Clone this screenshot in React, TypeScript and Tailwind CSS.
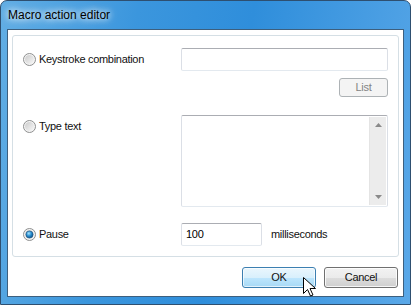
import React from "react";

const Radio = ({ checked }: { checked?: boolean }) => (
  <svg width="13" height="13" viewBox="0 0 13 13" className="shrink-0">
    <defs>
      <linearGradient id="rg" x1="0" y1="0" x2="1" y2="1">
        <stop offset="0" stopColor="#cbcbcb" />
        <stop offset="1" stopColor="#f8f8f8" />
      </linearGradient>
      <radialGradient id="dot" cx="0.4" cy="0.35" r="0.7">
        <stop offset="0" stopColor="#a8e6ff" />
        <stop offset="0.5" stopColor="#2a8ed0" />
        <stop offset="1" stopColor="#0c4f86" />
      </radialGradient>
    </defs>
    <circle cx="6.5" cy="6.5" r="6" fill="#f4f4f4" stroke="#8e8f8f" strokeWidth="1" />
    <circle cx="6.5" cy="6.5" r="4.5" fill="url(#rg)" />
    {checked && <circle cx="6.5" cy="6.5" r="3.6" fill="url(#dot)" stroke="#1b4f7a" strokeWidth="0.6" />}
  </svg>
);

const Label = ({ text, checked }: { text: string; checked?: boolean }) => (
  <div className="flex items-center gap-[3px] h-[23px] pl-[10px] w-[168px] shrink-0">
    <Radio checked={checked} />
    <span>{text}</span>
  </div>
);

const field =
  "border border-[#dbdfe6] border-t-[#abadb3] border-b-[#e3e9ef] rounded-[2px] bg-white";

export default function App() {
  return (
    <div
      className="relative w-[411px] h-[305px] flex flex-col rounded-t-[7px] border border-[#2e4f70] bg-[linear-gradient(100deg,#62aee4_0%,#3b96dd_30%,#2f8edb_55%,#5aa8e8_100%)] overflow-hidden"
      style={{ fontFamily: '"Liberation Sans", Arial, sans-serif' }}
    >
      {/* title bar */}
      <div className="h-[28px] flex items-center pl-[7px] text-[12px] text-black">
        <span className="[text-shadow:0_0_6px_#ffffff,0_0_10px_#ffffff]">Macro action editor</span>
      </div>

      {/* client area */}
      <div className="mx-[6px] mb-[7px] flex-1 border border-[#3d5f7e] bg-white flex flex-col pt-[5px] px-[4px] text-[11px] tracking-[-0.3px] text-[#111]">
        <div className="border border-[#d5dfe5] rounded-[3px] h-[222px] flex flex-col pt-[12px]">
          {/* keystroke */}
          <div className="flex">
            <Label text="Keystroke combination" />
            <div className={`${field} w-[207px] h-[23px]`} />
          </div>
          <div className="flex justify-end pr-[10px] mt-[7px]">
            <div className="w-[49px] h-[19px] border border-[#adb2b5] rounded-[3px] bg-[#f4f4f4] text-[#838383] flex items-center justify-center">
              List
            </div>
          </div>

          {/* type text */}
          <div className="flex mt-[18px]">
            <Label text="Type text" />
            <div className={`${field} w-[207px] h-[92px] flex justify-end p-[1px]`}>
              <div className="w-[17px] h-full bg-[#ececec] border-l border-[#e4e4e4] flex flex-col justify-between items-center py-[6px]">
                <svg width="7" height="4" viewBox="0 0 7 4">
                  <path d="M0 4 L3.5 0 L7 4 Z" fill="#8a8a8a" />
                </svg>
                <svg width="7" height="4" viewBox="0 0 7 4">
                  <path d="M0 0 L3.5 4 L7 0 Z" fill="#8a8a8a" />
                </svg>
              </div>
            </div>
          </div>

          {/* pause */}
          <div className="flex mt-[16px] items-center">
            <Label text="Pause" checked />
            <div className={`${field} w-[81px] h-[23px] flex items-center pl-[4px] text-black`}>100</div>
            <span className="ml-[9px] text-[#111]">milliseconds</span>
          </div>
        </div>

        {/* buttons */}
        <div className="flex justify-end gap-[8px] mt-[10px] pr-[1px]">
          <div className="w-[74px] h-[21px] rounded-[3px] border border-[#3c7fb1] bg-[linear-gradient(#eaf6fd_0%,#d9f0fc_50%,#bee6fd_51%,#a7d9f5_100%)] flex items-center justify-center shadow-[inset_0_0_0_1px_#ffffffaa]">
            OK
          </div>
          <div className="w-[74px] h-[21px] rounded-[3px] border border-[#707070] bg-[linear-gradient(#f2f2f2_0%,#ebebeb_50%,#dddddd_51%,#cfcfcf_100%)] flex items-center justify-center shadow-[inset_0_0_0_1px_#ffffffcc]">
            Cancel
          </div>
        </div>
      </div>

      {/* mouse cursor */}
      <svg className="absolute left-[302px] top-[276px]" width="13" height="20" viewBox="0 0 13 20">
        <path
          d="M0.5 0.5 L0.5 16.5 L4.5 12.5 L7.5 19 L10 18 L7 11.5 L12.5 11.5 Z"
          fill="#ffffff"
          stroke="#000000"
          strokeWidth="1"
          strokeLinejoin="round"
        />
      </svg>
    </div>
  );
}
